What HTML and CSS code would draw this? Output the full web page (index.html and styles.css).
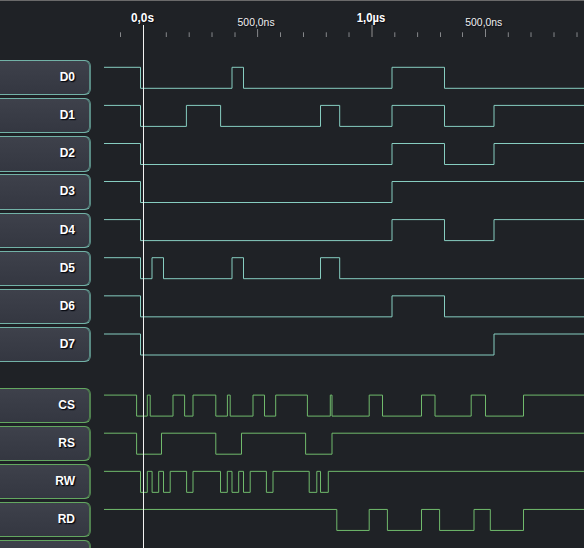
FILE: index.html
```
<!DOCTYPE html>
<html lang="en">
<head>
<meta charset="utf-8">
<title>Logic analyzer</title>
<link rel="stylesheet" href="styles.css">
</head>
<body>
<main class="analyzer">
  <div class="channels">
    <div class="group data">
      <div class="channel">D0</div>
      <div class="channel">D1</div>
      <div class="channel">D2</div>
      <div class="channel">D3</div>
      <div class="channel">D4</div>
      <div class="channel">D5</div>
      <div class="channel">D6</div>
      <div class="channel">D7</div>
    </div>
    <div class="group control">
      <div class="channel">CS</div>
      <div class="channel">RS</div>
      <div class="channel">RW</div>
      <div class="channel">RD</div>
      <div class="channel"></div>
    </div>
  </div>
  <svg class="plot" viewBox="92 1 492 547" width="492" height="547">
    <path class="tick" d="M120.5 32.3v4.7M166.3 32.3v4.7M189.2 32.3v4.7M212 32.3v4.7M235 32.3v4.7M280.5 32.3v4.7M303.5 32.3v4.7M326.3 32.3v4.7M349 32.3v4.7M394.8 32.3v4.7M417.6 32.3v4.7M440.5 32.3v4.7M462.5 32.3v4.7M508.3 32.3v4.7M531 32.3v4.7M554 32.3v4.7M577 32.3v4.7M257.6 29v8M485.5 29v8"/>
    <path class="tick major" d="M372 25v12"/>
    <text class="time bold" x="131" y="22" textLength="23" lengthAdjust="spacingAndGlyphs">0,0s</text>
    <text class="time" x="237.6" y="26" textLength="37" lengthAdjust="spacingAndGlyphs">500,0ns</text>
    <text class="time bold" x="356.8" y="22" textLength="28.5" lengthAdjust="spacingAndGlyphs">1,0µs</text>
    <text class="time" x="465.3" y="26" textLength="37" lengthAdjust="spacingAndGlyphs">500,0ns</text>
    <g class="wave data-wave">
      <path d="M104 67.3H140.5v21H232v-21H243.5v21H392v-21H444.5v21H584"/>
      <path d="M104 105.4H140.5v21H186.4v-21H220.6v21H320.5v-21H339.7v21H392v-21H444.5v21H494v-21H584"/>
      <path d="M104 143.5H140.5v21H392v-21H444.5v21H494v-21H584"/>
      <path d="M104 181.5H140.5v21H392v-21H584"/>
      <path d="M104 219.6H140.5v21H392v-21H444.5v21H494v-21H584"/>
      <path d="M104 257.7H140.5v21H152v-21H163.5v21H232v-21H243.5v21H320.5v-21H339.7v21H584"/>
      <path d="M104 295.85H140.5v21H392v-21H444.5v21H584"/>
      <path d="M104 334H140.5v21H494v-21H584"/>
    </g>
    <g class="wave control-wave">
      <path d="M104 395.1H136.6v21H147.3v-21H150.2v21H173v-21H184.6v21H193v-21H215.8v21H227.4v-21H230.2v21H253v-21H264.5v21H275.7v-21H307.4v21H330.3v-21H332v21H369.2v-21H382.5v21H421.5v-21H435v21H471.2v-21H485.5v21H523.5v-21H584"/>
      <path d="M104 433.2H136.6v21H161.5v-21H215.8v21H241.5v-21H305.6v21H332v-21H584"/>
      <path d="M104 471.35H140.5v21H147.3v-21H152.1v21H158.7v-21H163.5v21H170.2v-21H186.6v21H193v-21H220.5v21H227.3v-21H232v21H238.7v-21H243.5v21H250.2v-21H266.4v21H273v-21H309.2v21H316.8v-21H320.5v21H328.3v-21H584"/>
      <path d="M104 509.45H336.8v21H369.2v-21H387.4v21H421.5v-21H439.6v21H474v-21H490.3v21H523.5v-21H584"/>
    </g>
    <path class="cursor" d="M143.5 25V548"/>
  </svg>
</main>
</body>
</html>
```
FILE: styles.css
```
html, body {
  margin: 0;
  overflow: hidden;
}

body {
  background: #1f2226;
  font-family: "Liberation Sans", Arial, sans-serif;
}

.analyzer {
  box-sizing: border-box;
  display: grid;
  grid-template-columns: 92px 492px;
  width: 584px;
  height: 548px;
  border-top: 1px solid #6a6a6a;
  overflow: hidden;
}

.channels {
  display: flex;
  flex-direction: column;
  gap: 25.7px;
  padding-top: 59.1px;
  height: 547px;
  box-sizing: border-box;
  overflow: hidden;
}

.group {
  display: flex;
  flex: none;
  flex-direction: column;
  gap: 2.93px;
}

.channel {
  box-sizing: border-box;
  flex: none;
  width: 91px;
  height: 35.2px;
  padding-right: 15px;
  border: 1px solid #72b2a7;
  border-right-color: #598a83;
  border-left: 0;
  border-radius: 0 6px 6px 0;
  background: linear-gradient(#3e414b, #343741);
  box-shadow: inset -1px 0 0 #598a83;
  color: #fff;
  font-size: 12px;
  font-weight: bold;
  line-height: 33px;
  text-align: right;
  text-shadow: 1px 1px 1px #0a0c14, 1px 1px 1px #0a0c14;
}

.control .channel {
  border-color: #63a760;
  border-right-color: #50814f;
  border-left: 0;
  box-shadow: inset -1px 0 0 #50814f;
}

.plot {
  display: block;
}

.tick {
  fill: none;
  stroke: #85878a;
  stroke-width: 1;
}

.major {
  stroke: #58595b;
  stroke-width: 2;
}

.time {
  fill: #f0f0f0;
  font-size: 10.5px;
  text-shadow: 1px 1px 1px #0a0c14;
}

.bold {
  fill: #fff;
  font-size: 12px;
  font-weight: bold;
}

.wave {
  fill: none;
  stroke-width: 1;
}

.data-wave {
  stroke: #86cdc0;
}

.control-wave {
  stroke: #70ba6c;
}

.cursor {
  stroke: #f2f2f2;
  stroke-width: 1;
}
```
